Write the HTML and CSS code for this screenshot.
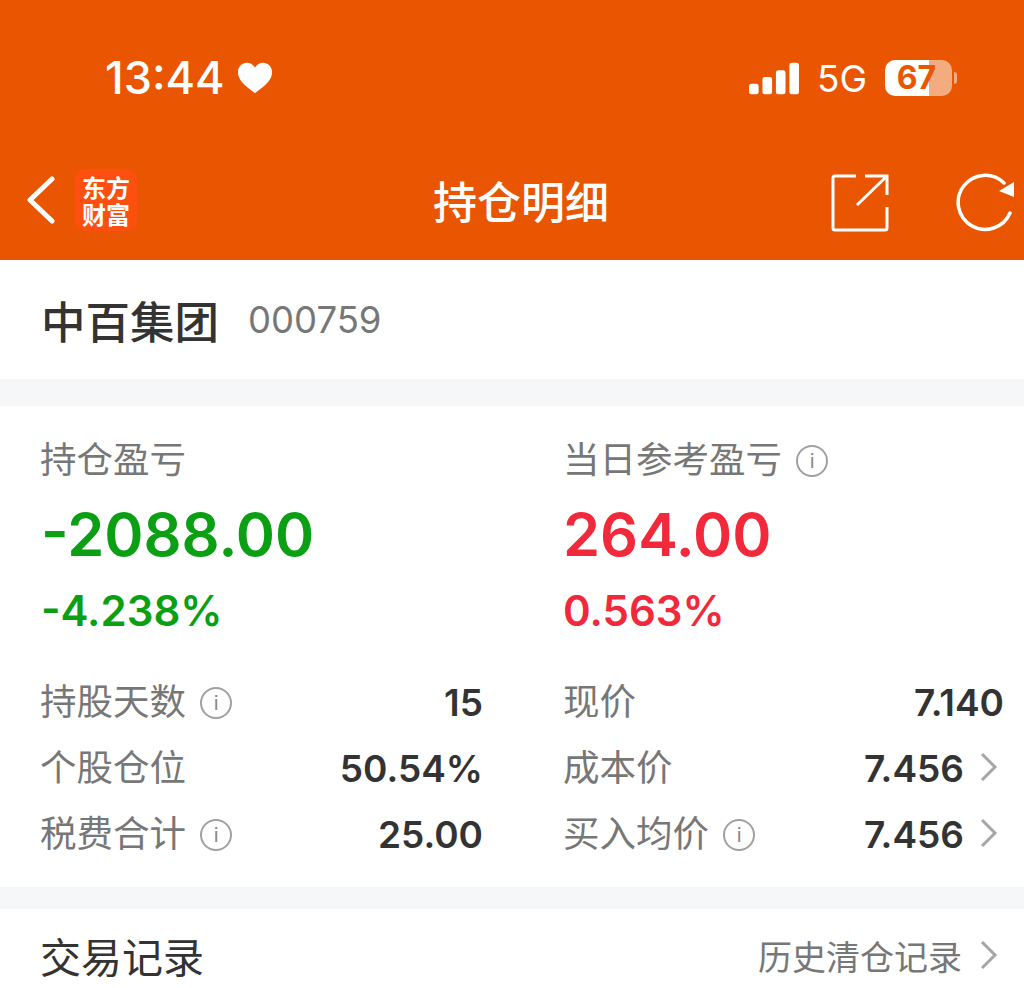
FILE: index.html

```html
<!DOCTYPE html>
<html lang="zh">
<head>
  <meta charset="UTF-8">
  <title>持仓明细</title>
  <meta name="viewport" content="width=device-width, initial-scale=1">
  <link rel="stylesheet" href="styles.css">
</head>
<body>
  <div class="top">
    <div class="status">
      <div class="clock">
        <span class="time">13:44</span>
        <svg class="heart" width="36" height="34" viewBox="0 0 38 34"><path d="M19 33C8 25 1 19 1 11C1 5 5.500 1 10.500 1C14 1 17 3 19 6C21 3 24 1 27.500 1C32.500 1 37 5 37 11C37 19 30 25 19 33Z" fill="#fff"/></svg>
      </div>
      <div class="signal">
        <svg width="50" height="33" viewBox="0 0 52 33"><g fill="#fff"><rect x="0" y="22" width="10" height="11" rx="2.500"/><rect x="14" y="15" width="10" height="18" rx="2.500"/><rect x="28" y="8" width="10" height="25" rx="2.500"/><rect x="42" y="0" width="10" height="33" rx="2.500"/></g></svg>
        <span class="net">5G</span>
        <div class="battery">67</div>
        <div class="battery-cap"></div>
      </div>
    </div>
    <div class="nav">
      <div class="nav-left">
        <svg width="30" height="48" viewBox="0 0 30 48"><path d="M26 3L4 24L26 45" fill="none" stroke="#fff" stroke-width="5" stroke-linecap="round" stroke-linejoin="round"/></svg>
        <div class="logo">东方<br>财富</div>
      </div>
      <div class="nav-title">持仓明细</div>
      <div class="nav-right">
        <svg width="58" height="58" viewBox="0 0 58 58"><path d="M25 2H4Q2 2 2 4V54Q2 56 4 56H54Q56 56 56 54V33M26 31L55 3M34 2H56V21" fill="none" stroke="#fff" stroke-width="3"/></svg>
        <svg width="60" height="60" viewBox="0 1 60 60"><path d="M55 41A27 27 0 1 1 49 11" fill="none" stroke="#fff" stroke-width="3.500" stroke-linecap="round"/><path d="M59 10V25L44 19Z" fill="#fff"/></svg>
      </div>
    </div>
  </div>

  <div class="stock">
    <span class="stock-name">中百集团</span>
    <span class="stock-code">000759</span>
  </div>

  <div class="card">
    <div class="summary">
      <div>
        <div class="label">持仓盈亏</div>
        <div class="amount green">-2088.00</div>
        <div class="percent green">-4.238%</div>
      </div>
      <div>
        <div class="label">当日参考盈亏 <span class="info">i</span></div>
        <div class="amount red">264.00</div>
        <div class="percent red">0.563%</div>
      </div>
    </div>
    <div class="details">
      <div class="row"><span class="label">持股天数 <span class="info">i</span></span><span class="val">15</span></div>
      <div class="row"><span class="label">现价</span><span class="val">7.140</span></div>
      <div class="row"><span class="label">个股仓位</span><span class="val">50.54%</span></div>
      <div class="row"><span class="label">成本价</span><span class="val">7.456</span><svg class="arrow" width="18" height="30" viewBox="0 0 18 30"><path d="M2 2L15 15L2 28" fill="none" stroke="#a6a6a6" stroke-width="3"/></svg></div>
      <div class="row"><span class="label">税费合计 <span class="info">i</span></span><span class="val">25.00</span></div>
      <div class="row"><span class="label">买入均价 <span class="info">i</span></span><span class="val">7.456</span><svg class="arrow" width="18" height="30" viewBox="0 0 18 30"><path d="M2 2L15 15L2 28" fill="none" stroke="#a6a6a6" stroke-width="3"/></svg></div>
    </div>
  </div>

  <div class="records">
    <span class="records-title">交易记录</span>
    <span class="records-link">历史清仓记录</span>
    <svg class="arrow" width="18" height="30" viewBox="0 0 18 30"><path d="M2 2L15 15L2 28" fill="none" stroke="#a6a6a6" stroke-width="3"/></svg>
  </div>
</body>
</html>
```

FILE: styles.css

```css
html, body {
  height: 988px;
  overflow: hidden;
}
body {
  margin: 0;
  background-color: #f6f7f9;
  color: #333;
  font-family: "Inter", "Noto Sans CJK SC", sans-serif;
}
.top {
  height: 260px;
  background-color: #e95500;
  color: white;
  box-sizing: border-box;
  padding-top: 52px;
}
.status {
  display: flex;
  justify-content: space-between;
  height: 52px;
  padding-left: 105px;
  padding-right: 67px;
}
.clock {
  display: flex;
  align-items: center;
  gap: 12px;
}
.time {
  font-size: 45px;
  font-weight: 500;
  line-height: 52px;
}
.signal {
  display: flex;
  align-items: center;
}
.net {
  font-size: 37px;
  margin-left: 18px;
  margin-right: 18px;
}
.battery {
  width: 67px;
  height: 36px;
  box-sizing: border-box;
  padding-right: 4px;
  border-radius: 10px;
  background: linear-gradient(to right, white 44px, #f3ac80 44px);
  color: #e95500;
  font-size: 32px;
  font-weight: 700;
  line-height: 36px;
  text-align: center;
}
.battery-cap {
  width: 3px;
  height: 12px;
  margin-left: 2px;
  background-color: #f3ac80;
  border-radius: 0 3px 3px 0;
}
.nav {
  display: flex;
  align-items: center;
  justify-content: space-between;
  margin-top: 63px;
  height: 66px;
  position: relative;
}
.nav-left {
  display: flex;
  align-items: center;
  gap: 19px;
  padding-left: 26px;
}
.logo {
  width: 62px;
  height: 62px;
  background-color: #fd4f0f;
  border-radius: 10px;
  font-family: "Noto Sans CJK SC", sans-serif;
  font-size: 24px;
  font-weight: 700;
  line-height: 27px;
  text-align: center;
  box-sizing: border-box;
  padding-top: 4px;
}
.nav-title {
  position: absolute;
  left: 433px;
  top: 0;
  font-family: "Noto Sans CJK SC", sans-serif;
  font-size: 44px;
  font-weight: 500;
  line-height: 66px;
}
.nav-right {
  display: flex;
  align-items: center;
  gap: 66px;
  padding-top: 6px;
  padding-right: 9px;
}
.stock {
  height: 119px;
  background-color: white;
  display: flex;
  align-items: center;
  padding-left: 41px;
  gap: 29px;
}
.stock-name {
  font-family: "Noto Sans CJK SC", sans-serif;
  font-size: 44.500px;
  font-weight: 500;
}
.stock-code {
  font-size: 36.500px;
  color: #777;
}
.card {
  margin-top: 27px;
  height: 481px;
  background-color: white;
  box-sizing: border-box;
  padding-top: 28px;
  padding-left: 40px;
}
.summary {
  display: grid;
  grid-template-columns: 443px 441px;
  column-gap: 80px;
}
.label {
  font-family: "Noto Sans CJK SC", sans-serif;
  font-size: 36.500px;
  color: #777;
  line-height: 48px;
}
.amount {
  font-size: 59.500px;
  font-weight: 600;
  line-height: 72px;
  margin-top: 16px;
}
.percent {
  font-size: 42px;
  font-weight: 600;
  line-height: 48px;
  margin-top: 17px;
}
.green { color: #0b9f14; margin-left: 1px; }
.red { color: #f2293a; }
.info {
  display: inline-block;
  width: 32px;
  height: 32px;
  box-sizing: border-box;
  border: 2px solid #a0a0a0;
  border-radius: 50%;
  margin-left: 6px;
  color: #888;
  font-family: "Inter", sans-serif;
  font-size: 20px;
  line-height: 28px;
  text-align: center;
  vertical-align: 5px;
}
.details {
  display: grid;
  grid-template-columns: 443px 441px;
  column-gap: 80px;
  grid-auto-rows: 66px;
  margin-top: 33px;
}
.row {
  display: flex;
  align-items: center;
}
.row .label {
  margin-right: auto;
  padding-bottom: 2px;
}
.val {
  font-size: 37px;
  font-weight: 600;
  color: #333;
  padding-top: 2px;
}
.arrow {
  margin-left: 16px;
  margin-right: 6px;
  flex: none;
}
.records {
  margin-top: 22px;
  height: 92px;
  background-color: white;
  display: flex;
  align-items: center;
  padding-left: 40px;
  padding-right: 20px;
}
.records .arrow {
  margin-left: 18px;
}
.records-title {
  font-family: "Noto Sans CJK SC", sans-serif;
  font-size: 41px;
  margin-right: auto;
}
.records-link {
  font-family: "Noto Sans CJK SC", sans-serif;
  font-size: 34px;
  color: #777;
}
```
